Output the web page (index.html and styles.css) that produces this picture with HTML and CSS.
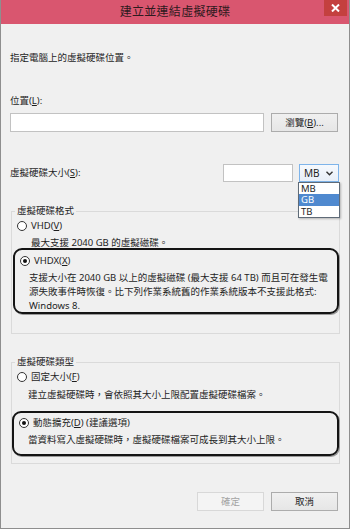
FILE: index.html
```html
<!DOCTYPE html>
<html lang="zh-Hant">
<head>
    <meta charset="UTF-8">
    <meta name="viewport" content="width=device-width, initial-scale=1.0">
    <title>建立並連結虛擬硬碟</title>
    <link rel="stylesheet" href="styles.css">
</head>
<body>
    <div class="window">
        <div class="titlebar">
            <span></span>
            <span class="title">建立並連結虛擬硬碟</span>
            <span class="close">
                <svg width="9" height="8" viewBox="0 0 9 8"><path d="M1 0.5 L8 7.5 M8 0.5 L1 7.5" stroke="#fff" stroke-width="2"/></svg>
            </span>
        </div>

        <div class="content">
            <p class="intro">指定電腦上的虛擬硬碟位置。</p>

            <p class="label">位置(<u>L</u>):</p>
            <div class="row location-row">
                <div class="textbox location"></div>
                <div class="btn"><span>瀏覽(<u>B</u>)...</span></div>
            </div>

            <div class="row size-row">
                <span class="label grow">虛擬硬碟大小(<u>S</u>):</span>
                <div class="textbox size"></div>
                <div class="select-wrap">
                    <div class="select">
                        <span>MB</span>
                        <svg width="7" height="5" viewBox="0 0 7 5"><path d="M0.5 0.8 L3.5 3.8 L6.5 0.8" fill="none" stroke="#333" stroke-width="1.4"/></svg>
                    </div>
                    <ul class="dropdown">
                        <li>MB</li>
                        <li class="active">GB</li>
                        <li>TB</li>
                    </ul>
                </div>
            </div>

            <div class="group format">
                <div class="group-title">虛擬硬碟格式</div>
                <div class="option first">
                    <span class="radio"></span><span>VHD(<u>V</u>)</span>
                </div>
                <p class="desc">最大支援 2040 GB 的虛擬磁碟。</p>
                <div class="mark vhdx">
                    <div class="option">
                        <span class="radio checked"></span><span>VHDX(<u>X</u>)</span>
                    </div>
                    <p class="desc">支援大小在 2040 GB 以上的虛擬磁碟 (最大支援 64 TB) 而且可在發生電<br>源失敗事件時恢復。比下列作業系統舊的作業系統版本不支援此格式:<br>Windows 8.</p>
                </div>
            </div>

            <div class="group type">
                <div class="group-title">虛擬硬碟類型</div>
                <div class="option first">
                    <span class="radio"></span><span>固定大小(<u>F</u>)</span>
                </div>
                <p class="desc fixed-desc">建立虛擬硬碟時，會依照其大小上限配置虛擬硬碟檔案。</p>
                <div class="mark dynamic">
                    <div class="option">
                        <span class="radio checked"></span><span>動態擴充(<u>D</u>) (建議選項)</span>
                    </div>
                    <p class="desc">當資料寫入虛擬硬碟時，虛擬硬碟檔案可成長到其大小上限。</p>
                </div>
            </div>

            <div class="actions">
                <div class="btn disabled">確定</div>
                <div class="btn">取消</div>
            </div>
        </div>
    </div>
</body>
</html>
```

FILE: styles.css
```css
body {
    margin: 0;
    background-color: #fff;
    font-family: "Noto Sans", "Noto Sans CJK TC", sans-serif;
    font-size: 9.5px;
    line-height: 14px;
    color: #1e1e1e;
}
p {
    margin: 0;
}
u {
    text-underline-offset: 1px;
}
.window {
    width: 350px;
    height: 529px;
    box-sizing: border-box;
    background-color: #f0f0f0;
    border: 1px solid #8e8e8e;
    border-top: none;
}
.titlebar {
    display: grid;
    grid-template-columns: 1fr auto 1fr;
    height: 24px;
    background-color: #d9566f;
}
.title {
    font-size: 12px;
    line-height: 24px;
    color: #2e1a1e;
    letter-spacing: 0.3px;
}
.close {
    justify-self: end;
    display: flex;
    align-items: center;
    justify-content: center;
    width: 23px;
    height: 16px;
    margin-right: 2px;
    background-color: #c4403f;
}
.content {
    padding: 0 10px 0 9px;
}
.intro {
    margin-top: 27px;
}
.label {
    margin-top: 29px;
}
.row {
    display: flex;
    align-items: center;
}
.location-row {
    margin-top: 5px;
    gap: 7px;
}
.textbox {
    box-sizing: border-box;
    background-color: #fff;
    border: 1px solid #c2c2c2;
}
.location {
    width: 254px;
    height: 19px;
}
.btn {
    box-sizing: border-box;
    width: 67px;
    height: 19px;
    display: flex;
    align-items: center;
    justify-content: center;
    background: linear-gradient(#f0f0f0, #e6e6e6);
    border: 1px solid #acacac;
    color: #1e1e1e;
}
.btn.disabled {
    background: #f4f4f4;
    border-color: #d8d8d8;
    color: #a3a3a3;
}
.size-row {
    margin-top: 32px;
    height: 18px;
}
.size-row .label {
    margin-top: 0;
}
.grow {
    flex: 1;
}
.size {
    width: 70px;
    height: 18px;
}
.select-wrap {
    position: relative;
    margin-left: 6px;
}
.select {
    box-sizing: border-box;
    width: 40px;
    height: 18px;
    display: flex;
    align-items: center;
    justify-content: space-between;
    padding: 0 5px 0 4px;
    background: linear-gradient(#f6f9fd, #e8eff8);
    border: 1px solid #7eb4ea;
    font-size: 10px;
}
.dropdown {
    position: absolute;
    top: 18px;
    left: -1px;
    width: 42px;
    box-sizing: border-box;
    margin: 0;
    padding: 0;
    list-style: none;
    background-color: #fff;
    border: 1px solid #5f6b78;
    font-size: 9.5px;
    line-height: 11.3px;
    box-shadow: 1px 1px 2px rgba(0, 0, 0, 0.25);
}
.dropdown li {
    height: 11.3px;
    padding-left: 2px;
}
.dropdown li.active {
    background-color: #4f89cf;
    color: #fff;
}
.group {
    margin: 29px -1px 0 1px;
    border: 1px solid #dadada;
}
.type {
    margin-top: 28px;
    padding-bottom: 7px;
}
.format {
    padding-bottom: 19px;
}
.group-title {
    width: fit-content;
    margin: -8px 0 0 3px;
    padding: 0 2px;
    background-color: #f0f0f0;
}
.option {
    display: flex;
    align-items: center;
    gap: 4px;
    padding-left: 5px;
}
.option.first {
    margin-top: 1px;
}
.radio {
    box-sizing: border-box;
    width: 10px;
    height: 10px;
    border-radius: 50%;
    border: 1px solid #333;
    background-color: #fff;
    display: flex;
    align-items: center;
    justify-content: center;
}
.radio.checked::after {
    content: "";
    width: 4px;
    height: 4px;
    border-radius: 50%;
    background-color: #111;
}
.desc {
    margin-top: 3px;
    padding-left: 19px;
    white-space: nowrap;
}
.fixed-desc {
    margin-top: 4px;
    padding-left: 16px;
}
.mark {
    border: 2px solid #141414;
    border-radius: 9px;
    box-shadow: 1px 1px 0 #9a9a9a;
}
.mark .desc {
    padding-left: 14px;
}
.vhdx {
    margin: -2px 0 0 1px;
    padding: 4px 0 0;
    height: 58px;
}
.dynamic {
    margin-top: 9px;
    padding: 3px 0 7px;
}
.actions {
    display: flex;
    justify-content: flex-end;
    gap: 7px;
    margin: 28px 1px 0 0;
}
```
